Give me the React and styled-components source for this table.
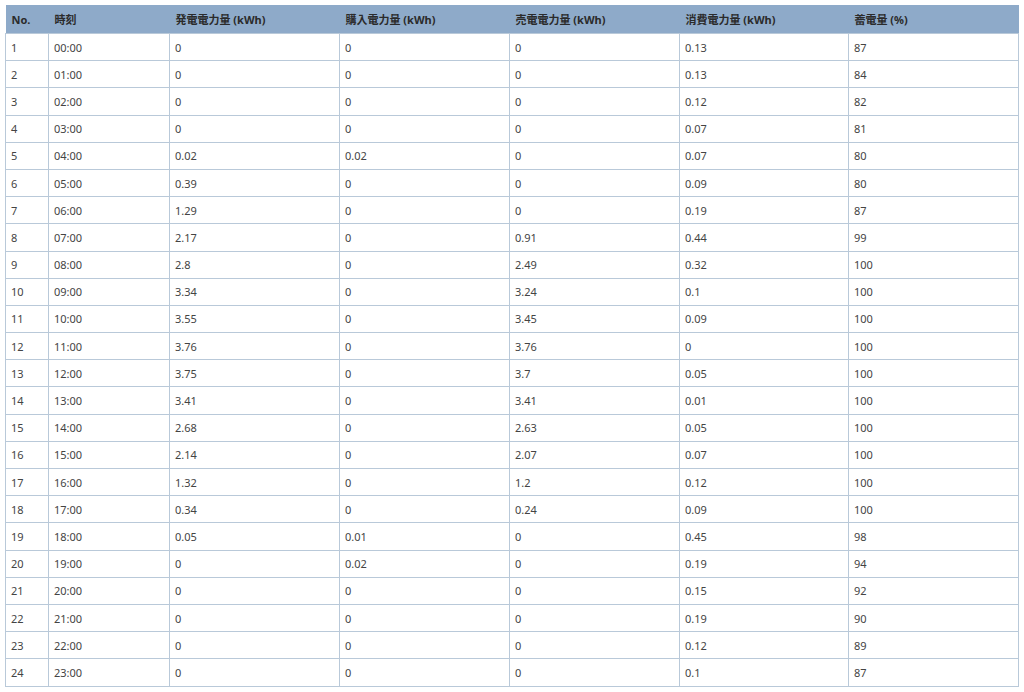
import React from 'react'
import styled, { createGlobalStyle } from 'styled-components'

const GlobalStyle = createGlobalStyle`
body {
  margin: 0;
  background: #ffffff;
  font-family: "Noto Sans", "Noto Sans CJK JP", sans-serif;
}
`;

const Page = styled.div`
padding: 5px 6px 0 5px;
`;

const Table = styled.table`
width: 1013px;
border-collapse: collapse;
table-layout: fixed;
font-size: 11px;
color: #444;
`;

const Col = styled.col`
width: ${props => props.w}px;
`;

const Head = styled.th`
background-color: #8eaac9;
color: #2b2b2b;
font-weight: 700;
text-align: left;
height: 28px;
padding: 0 0 0 6px;
border: none;
font-size: 11px;
`;

const Row = styled.tr`
height: 27.2px;
`;

const Cell = styled.td`
border: 1px solid #b9c9d9;
padding: 0 0 0 5px;
vertical-align: middle;
`;

const columns = [
  { label: 'No.', w: 43 },
  { label: '時刻', w: 121 },
  { label: '発電電力量 (kWh)', w: 170 },
  { label: '購入電力量 (kWh)', w: 170 },
  { label: '売電電力量 (kWh)', w: 170 },
  { label: '消費電力量 (kWh)', w: 169 },
  { label: '蓄電量 (%)', w: 170 },
];

const data = [
  [0, 0, 0, 0.13, 87],
  [0, 0, 0, 0.13, 84],
  [0, 0, 0, 0.12, 82],
  [0, 0, 0, 0.07, 81],
  [0.02, 0.02, 0, 0.07, 80],
  [0.39, 0, 0, 0.09, 80],
  [1.29, 0, 0, 0.19, 87],
  [2.17, 0, 0.91, 0.44, 99],
  [2.8, 0, 2.49, 0.32, 100],
  [3.34, 0, 3.24, 0.1, 100],
  [3.55, 0, 3.45, 0.09, 100],
  [3.76, 0, 3.76, 0, 100],
  [3.75, 0, 3.7, 0.05, 100],
  [3.41, 0, 3.41, 0.01, 100],
  [2.68, 0, 2.63, 0.05, 100],
  [2.14, 0, 2.07, 0.07, 100],
  [1.32, 0, 1.2, 0.12, 100],
  [0.34, 0, 0.24, 0.09, 100],
  [0.05, 0.01, 0, 0.45, 98],
  [0, 0.02, 0, 0.19, 94],
  [0, 0, 0, 0.15, 92],
  [0, 0, 0, 0.19, 90],
  [0, 0, 0, 0.12, 89],
  [0, 0, 0, 0.1, 87],
];

const pad = n => String(n).padStart(2, '0');

export default function App() {
  return (
    <Page>
      <GlobalStyle />
      <Table>
        <colgroup>
          {columns.map(c => (
            <Col key={c.label} w={c.w} />
          ))}
        </colgroup>
        <thead>
          <tr>
            {columns.map(c => (
              <Head key={c.label}>{c.label}</Head>
            ))}
          </tr>
        </thead>
        <tbody>
          {data.map((r, i) => (
            <Row key={i}>
              <Cell>{i + 1}</Cell>
              <Cell>{pad(i)}:00</Cell>
              {r.map((v, j) => (
                <Cell key={j}>{v}</Cell>
              ))}
            </Row>
          ))}
        </tbody>
      </Table>
    </Page>
  )
}
